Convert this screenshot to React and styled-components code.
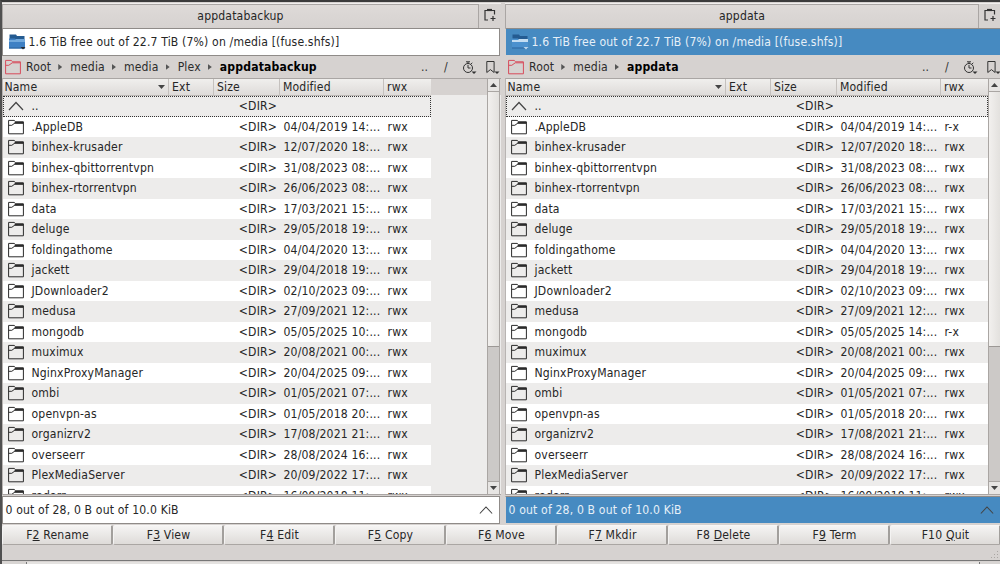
import React from 'react';
import styled, { createGlobalStyle, css } from 'styled-components';

const colors = {
  window: '#d6d2d0',
  base: '#ffffff',
  alternate: '#edeceb',
  highlight: '#468ac1',
  border: '#8f8b88',
  text: '#262626',
};

const GlobalStyle = createGlobalStyle`
  * {
    box-sizing: border-box;
  }

  body {
    margin: 0;
    overflow: hidden;
    background: ${colors.window};
    color: ${colors.text};
    font-family: 'DejaVu Sans Condensed', 'DejaVu Sans', sans-serif;
    font-size: 12.1px;
    font-stretch: condensed;
    letter-spacing: 0.16px;
    line-height: 14px;
    white-space: nowrap;
  }
`;

const Window = styled.div`
  display: flex;
  flex-direction: column;
  width: 1000px;
  height: 564px;
  overflow: hidden;
  border-top: 2px solid #3b3b3b;
  border-left: 2px solid #505050;
  background: ${colors.window};
`;

const Panels = styled.div`
  display: flex;
  gap: 4px;
  height: 522px;
  padding-top: 1px;
`;

const Panel = styled.section`
  display: flex;
  flex-direction: column;
  flex: none;
  width: 499px;
`;

const TabBar = styled.div`
  display: flex;
  flex: none;
  height: 25px;
  border-top: 1px solid #f1efee;
`;

const Tab = styled.div`
  flex: none;
  width: ${props => props.$width}px;
  height: 24px;
  padding-top: 4px;
  border: 1px solid #aaa6a4;
  border-bottom: 0;
  background: linear-gradient(#dedad8, #d6d2d0);
  text-align: center;
`;

const NewTab = styled.button`
  flex: none;
  width: 16px;
  margin-left: 3px;
  padding: 0;
  border: 0;
  background: none;
  color: #333;
`;

const InfoBar = styled.div`
  display: flex;
  align-items: center;
  flex: none;
  width: ${props => props.$active ? 500 : 498}px;
  height: 28px;
  padding: 0 0 1px 5px;
  border: 1px solid ${props => props.$active ? '#d6d2d0' : colors.border};
  border-top-color: ${colors.border};
  background: ${props => props.$active ? colors.highlight : colors.base};
  color: ${props => props.$active ? '#e6f0f8' : colors.text};

  svg {
    margin-right: 2.5px;
  }
`;

const PathBar = styled.div`
  display: flex;
  align-items: center;
  flex: none;
  height: 22px;
  padding-left: 3px;
`;

const Crumbs = styled.div`
  display: flex;
  align-items: center;
  flex: 1;
  margin-left: 5px;
  color: #2c2c2c;
`;

const Separator = styled.i`
  width: 4px;
  height: 6px;
  margin: 0 8px 0 7px;
  background: #555;
  clip-path: polygon(0 0, 100% 50%, 0 100%);
`;

const CurrentCrumb = styled.b`
  color: #000;
`;

const PathTools = styled.div`
  display: grid;
  grid-template-columns: 23px 18px 23px 16px;
  align-items: center;
  margin-right: ${props => props.$active ? 2 : 0}px;
  color: #333;

  svg {
    margin-top: 1px;
  }
`;

const FileArea = styled.div`
  display: flex;
  flex: none;
  height: 417px;
  overflow: hidden;
  border-top: 1px solid #aaa6a4;
  border-bottom: 1px solid #aaa6a4;
  border-left: 1px solid #b8b4b2;
  background: linear-gradient(${colors.window} 16px, ${colors.alternate} 16px);
`;

const Table = styled.div`
  flex: none;
  width: ${props => props.$nameWidth + 262}px;
  margin-right: ${props => props.$gap}px;
`;

const columns = css`
  display: grid;
  grid-template-columns: ${props => props.$nameWidth}px 45px 66px 104px 47px;
`;

const HeaderRow = styled.div`
  ${columns}
  height: 17px;
  border-bottom: 1px solid #bcb8b5;
  background: linear-gradient(#f0efed, #dedbd9);
`;

const HeaderCell = styled.div`
  display: flex;
  align-items: center;
  justify-content: space-between;
  padding: 0 3px 0 ${props => props.$first ? 1.5 : 3}px;
  border-right: ${props => props.$last ? 0 : '1px solid #c5c1be'};
`;

const SortArrow = styled.i`
  width: 7px;
  height: 4px;
  background: #444;
  clip-path: polygon(0 0, 100% 0, 50% 100%);
`;

const FileRow = styled.div`
  ${columns}
  align-items: center;
  height: 20.5px;
  background: ${props => props.$odd ? colors.base : colors.alternate};
  outline: ${props => props.$current ? '1px dotted #333' : 'none'};
  outline-offset: -1px;
`;

const NameCell = styled.div`
  display: flex;
  align-items: center;
  padding-left: 5px;

  svg {
    flex: none;
    margin-right: 7.5px;
  }
`;

const Cell = styled.div`
  padding-left: ${props => props.$pad}px;
  padding-right: ${props => props.$right ? 3 : 0}px;
  text-align: ${props => props.$right ? 'right' : 'left'};
`;

const ScrollBar = styled.div`
  display: flex;
  flex-direction: column;
  width: 13px;
  flex: none;
  border: 1px solid #aaa6a3;
  border-width: 0 1px;
  background: #ccc9c7;
`;

const ScrollButton = styled.div`
  display: flex;
  align-items: center;
  justify-content: center;
  flex: none;
  height: 13px;
  background: #e7e5e3;
  border: 0 solid #aaa6a3;
  border-width: ${props => props.$down ? '1px 0 0' : '0 0 1px'};

  &::after {
    content: '';
    width: 7px;
    height: 4px;
    background: #444;
    clip-path: ${props => props.$down ? 'polygon(0 0, 100% 0, 50% 100%)' : 'polygon(0 100%, 100% 100%, 50% 0)'};
  }
`;

const ScrollThumb = styled.div`
  height: 255px;
  border-bottom: 1px solid #9c9895;
  background: linear-gradient(90deg, #f2f0ee, #e3e1de);
`;

const ScrollTrack = styled.div`
  flex: 1;
`;

const StatusBar = styled(InfoBar)`
  height: 28px;
  margin-top: 1px;
  padding: 0 ${props => props.$active ? 10 : 6}px 0 2.5px;
  justify-content: space-between;

  svg {
    margin: 0;
  }
`;

const FunctionKeys = styled.div`
  display: grid;
  grid-template-columns: repeat(9, 111px);
  flex: none;
  height: 22px;
  padding-top: 1px;
`;

const FunctionKey = styled.button`
  height: 20px;
  padding: 0 0 1px 1px;
  border: 1px solid #aaa6a3;
  border-top-color: #f8f7f6;
  border-left-color: #f4f3f2;
  border-right: 2px solid #a29f9c;
  border-radius: 2px;
  background: linear-gradient(#f5f4f3, #dedbd8);
  color: ${colors.text};
  font: inherit;
  letter-spacing: inherit;

  u {
    text-underline-offset: 1px;
  }
`;

const BottomEdge = styled.footer`
  display: flex;
  align-items: flex-end;
  justify-content: flex-end;
  flex: none;
  height: 15px;
  border-bottom: 1px solid #777;
`;

const Desktop = styled.div`
  flex: 1;
  margin-top: 1px;
  background: #e5e3e1;
  border-left: 24px solid #d8d5d3;
  border-right: 20px solid #d8d5d3;
  box-shadow: inset 1px 0 #777, inset -1px 0 #777;
`;

function FolderIcon({ color = '#2b2b2b' }) {
  return (
    <svg width="16" height="16" viewBox="0 0 16 16" fill="none" stroke={color}>
      <path d="M.6 14.8V1.4h5.6l1.5 1.4h7.7v12z" />
      <path d="M.6 6.3h3.2L7.2 3.8h8" />
      {color === '#2b2b2b' && <path d="M6.7 3.8h8.6" strokeWidth="2" />}
    </svg>
  );
}

function DeviceIcon({ active }) {
  return (
    <svg width="18" height="17" viewBox="0 0 18 17">
      <path d="M1.5 1.5H8l1 1.5h7.5V7h-15z" fill="#245b91" />
      <path d="M1 5.5h6L8 7h9v8.5H1z" fill={active ? '#4b91ce' : '#3e80c4'} />
      <path d="M1 7h6l1-1h9v3H1z" fill={active ? '#c3ddf2' : '#72a9dc'} />
      <path d="M1 15h16" stroke="#2b629c" />
      <path d="M12.5 14h5L15 16.5z" fill={active ? '#b9d4eb' : '#252b33'} />
    </svg>
  );
}

function NewTabIcon() {
  return (
    <svg width="14" height="14" viewBox="0 0 14 14" fill="none" stroke="currentColor" strokeWidth="1.2">
      <path d="M5 12H2V2.5h9.5v4M10 8v5M7.5 10.5h5" />
      <path d="M4 2h5" strokeWidth="2.2" />
    </svg>
  );
}

function HistoryIcon() {
  return (
    <svg width="15" height="15" viewBox="0 0 15 15" fill="none" stroke="currentColor">
      <circle cx="6" cy="8" r="4.5" />
      <path d="M4 1.8h4M6 2v2M9 4l1.3-1.2M6 5v3h2.5" />
      <path d="M9.5 11.5h5L12 14z" fill="currentColor" stroke="none" />
    </svg>
  );
}

function BookmarkIcon() {
  return (
    <svg width="15" height="15" viewBox="0 0 15 15" fill="none" stroke="currentColor">
      <path d="M1.8 1.5h7.3v11L5.4 9.6l-3.6 2.9z" />
      <path d="M9.5 11.5h5L12 14z" fill="currentColor" stroke="none" />
    </svg>
  );
}

function UpIcon({ size = 16, color = '#444' }) {
  return (
    <svg width={size} height={size} viewBox="0 0 16 16" fill="none" stroke={color} strokeWidth="1.2">
      <path d="M1 12l7-7.5L15 12" />
    </svg>
  );
}

function Grip() {
  return (
    <svg width="10" height="10" viewBox="0 0 10 10" stroke="#aaa6a3" strokeDasharray="1 2">
      <path d="M7 1.5h3M4 4.5h6M1 7.5h9" />
    </svg>
  );
}

const files = [
  ['.AppleDB', '04/04/2019 14:...'],
  ['binhex-krusader', '12/07/2020 18:...'],
  ['binhex-qbittorrentvpn', '31/08/2023 08:...'],
  ['binhex-rtorrentvpn', '26/06/2023 08:...'],
  ['data', '17/03/2021 15:...'],
  ['deluge', '29/05/2018 19:...'],
  ['foldingathome', '04/04/2020 13:...'],
  ['jackett', '29/04/2018 19:...'],
  ['JDownloader2', '02/10/2023 09:...'],
  ['medusa', '27/09/2021 12:...'],
  ['mongodb', '05/05/2025 10:...', '05/05/2025 14:...'],
  ['muximux', '20/08/2021 00:...'],
  ['NginxProxyManager', '20/04/2025 09:...'],
  ['ombi', '01/05/2021 07:...'],
  ['openvpn-as', '01/05/2018 20:...'],
  ['organizrv2', '17/08/2021 21:...'],
  ['overseerr', '28/08/2024 16:...'],
  ['PlexMediaServer', '20/09/2022 17:...'],
  ['radarr', '16/09/2018 11:...'],
];

const functionKeys = [
  ['F', '2', ' Rename'],
  ['F', '3', ' View'],
  ['F', '4', ' Edit'],
  ['F', '5', ' Copy'],
  ['F', '6', ' Move'],
  ['F', '7', ' Mkdir'],
  ['F8 ', 'D', 'elete'],
  ['F', '9', ' Term'],
  ['F10 ', 'Q', 'uit'],
];

function FilePanel({ path, active, nameWidth, gap, tabWidth }) {
  const current = path[path.length - 1];
  const readOnly = ['.AppleDB', 'mongodb'];

  return (
    <Panel>
      <TabBar>
        <Tab $width={tabWidth}>{current}</Tab>
        <NewTab><NewTabIcon /></NewTab>
      </TabBar>
      <InfoBar $active={active}>
        <DeviceIcon active={active} />
        1.6 TiB free out of 22.7 TiB (7%) on /media [(fuse.shfs)]
      </InfoBar>
      <PathBar>
        <FolderIcon color="#d74b5b" />
        <Crumbs>
          {path.slice(0, -1).map((name, i) => (
            <React.Fragment key={i}>
              <span>{name}</span>
              <Separator />
            </React.Fragment>
          ))}
          <CurrentCrumb>{current}</CurrentCrumb>
        </Crumbs>
        <PathTools $active={active}>
          <span>..</span>
          <span>/</span>
          <HistoryIcon />
          <BookmarkIcon />
        </PathTools>
      </PathBar>
      <FileArea>
        <Table $nameWidth={nameWidth} $gap={gap}>
          <HeaderRow $nameWidth={nameWidth}>
            <HeaderCell $first>Name <SortArrow /></HeaderCell>
            <HeaderCell>Ext</HeaderCell>
            <HeaderCell>Size</HeaderCell>
            <HeaderCell>Modified</HeaderCell>
            <HeaderCell $last>rwx</HeaderCell>
          </HeaderRow>
          <FileRow $nameWidth={nameWidth} $current>
            <NameCell><UpIcon />..</NameCell>
            <Cell />
            <Cell $right>&lt;DIR&gt;</Cell>
          </FileRow>
          {files.map(([name, date, activeDate], i) => (
            <FileRow key={name} $nameWidth={nameWidth} $odd={i % 2 === 0}>
              <NameCell><FolderIcon />{name}</NameCell>
              <Cell />
              <Cell $right>&lt;DIR&gt;</Cell>
              <Cell $pad={3.5}>{active && activeDate ? activeDate : date}</Cell>
              <Cell $pad={3.5}>{active && readOnly.includes(name) ? 'r-x' : 'rwx'}</Cell>
            </FileRow>
          ))}
        </Table>
        <ScrollBar>
          <ScrollButton />
          <ScrollThumb />
          <ScrollTrack />
          <ScrollButton $down />
        </ScrollBar>
      </FileArea>
      <StatusBar $active={active}>
        0 out of 28, 0 B out of 10.0 KiB
        <UpIcon size={14} />
      </StatusBar>
    </Panel>
  );
}

export default function App() {
  return (
    <>
      <GlobalStyle />
      <Window>
        <Panels>
          <FilePanel
            path={['Root', 'media', 'media', 'Plex', 'appdatabackup']}
            nameWidth={166}
            gap={56}
            tabWidth={477}
          />
          <FilePanel
            path={['Root', 'media', 'appdata']}
            nameWidth={220}
            gap={0}
            tabWidth={474}
            active
          />
        </Panels>
        <FunctionKeys>
          {functionKeys.map(([before, key, after]) => (
            <FunctionKey key={before + key}>{before}<u>{key}</u>{after}</FunctionKey>
          ))}
        </FunctionKeys>
        <BottomEdge><Grip /></BottomEdge>
        <Desktop />
      </Window>
    </>
  );
}
